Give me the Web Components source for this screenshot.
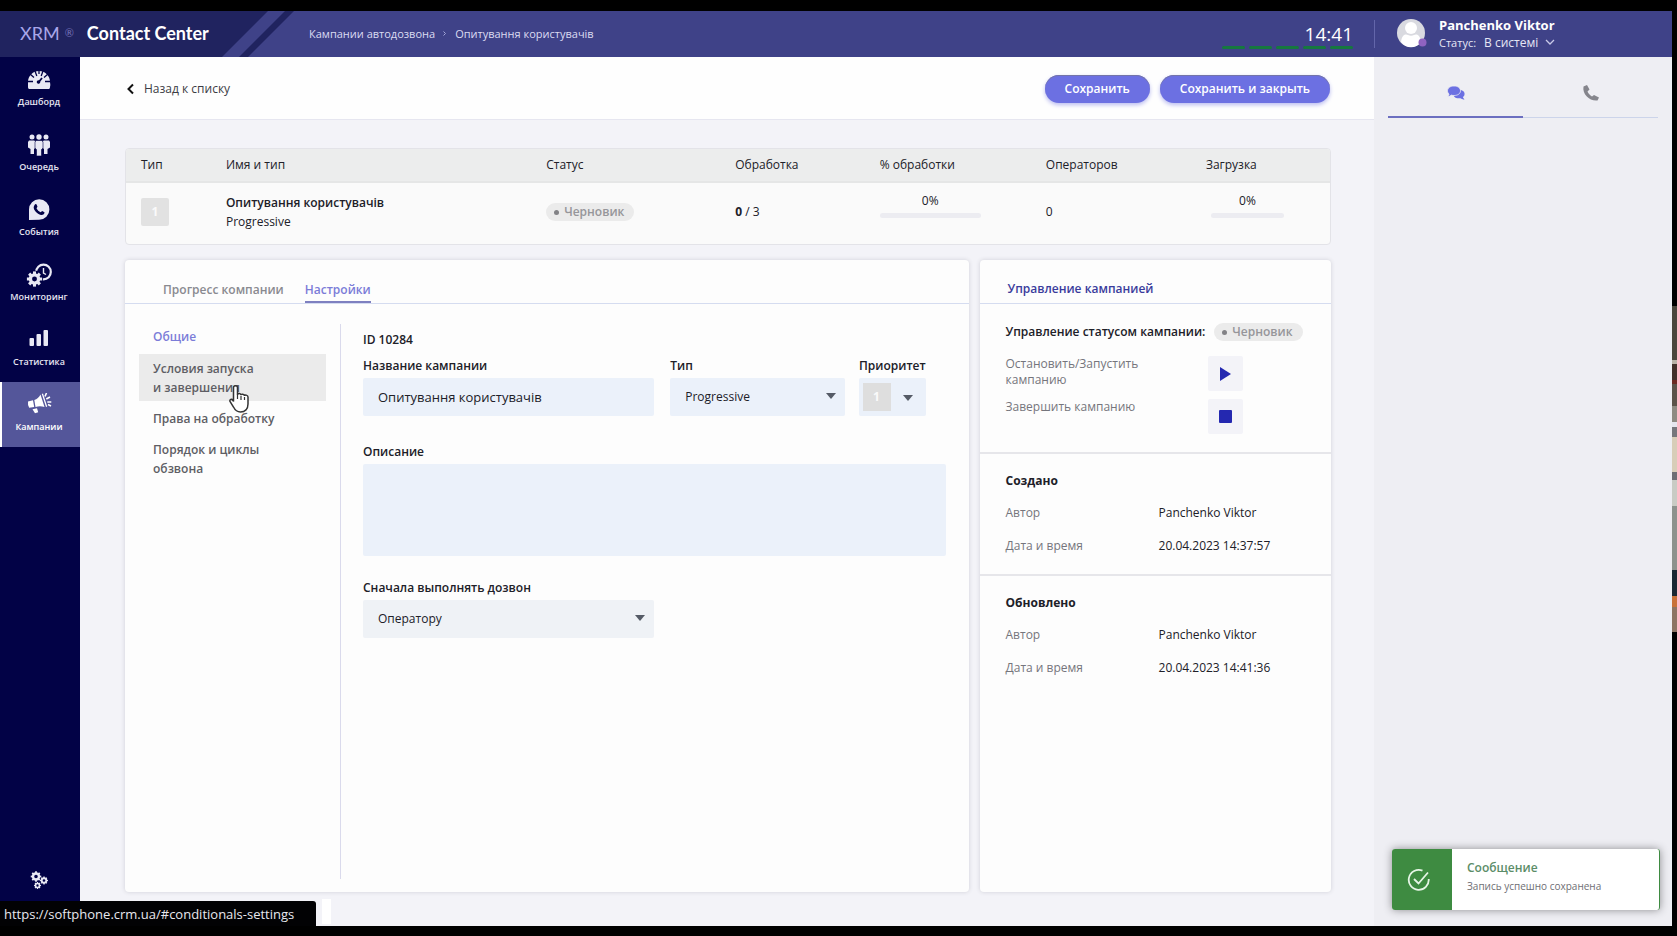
<!DOCTYPE html>
<html lang="ru">
<head>
<meta charset="utf-8">
<title>XRM Contact Center</title>
<style>
  html, body { height: 100%; }
  body { margin: 0; background: #000; font-family: "Open Sans", "Noto Sans", sans-serif; font-size: 12px; line-height: 18px; color: #202028; overflow: hidden; }
</style>
</head>
<body>
<xrm-app></xrm-app>
<script>
const define = (name, html) => {
  const tpl = document.createElement('template');
  tpl.innerHTML = '<style>*{box-sizing:border-box}:host{box-sizing:border-box;display:block}a{color:inherit;text-decoration:none}button,input,select,textarea{font:inherit;color:inherit;border:0;margin:0;outline:0}</style>' + html;
  customElements.define(name, class extends HTMLElement {
    constructor() {
      super();
      this.attachShadow({ mode: 'open' }).append(tpl.content.cloneNode(true));
    }
  });
};

const gear = (cx, cy, r, w, teeth) => {
  let s = '';
  for (let i = 0; i < teeth; i++) s += `<rect x="${cx - w / 2}" y="${cy - r - w * 0.7}" width="${w}" height="${w * 1.2}" transform="rotate(${i * 360 / teeth} ${cx} ${cy})" fill="#e9e9f4"/>`;
  return s + `<circle cx="${cx}" cy="${cy}" r="${r * 0.75}" fill="none" stroke="#e9e9f4" stroke-width="${r * 0.6}"/>`;
};

/* Status pill */
define('xrm-badge', `
<style>
  :host { display: inline-flex; align-items: center; gap: 5px; height: 18px; padding: 0 10px 0 8px; border-radius: 9px; background: #ebebeb; color: #96969a; font-weight: 600; }
  i { width: 5px; height: 5px; border-radius: 50%; background: #828286; }
</style><i></i><slot></slot>`);

/* Header bar */
define('xrm-header', `
<style>
  :host { display: flex; align-items: stretch; height: 46px; background: #3f4288; color: #fff; }
  .brand { width: 294px; flex: none; display: flex; align-items: center; padding: 0 0 3px 20px; font-family: Lato, sans-serif; font-size: 18px; white-space: nowrap;
    background: #20235f; clip-path: polygon(0 0, 100% 0, 248px 100%, 0 100%); position: relative; }
  .brand svg { position: absolute; left: 0; top: 0; }
  .x { color: #a9a6ea; }
  .r { font-size: 11px; color: #7672b8; margin: 0 13px 0 5px; }
  .cc { font-weight: 700; }
  .crumbs { display: flex; align-items: center; gap: 8px; margin-left: 15px; padding-bottom: 1px; color: #dcdcf2; flex: 1; font-size: 11px; font-weight: 500; }
  .clock { width: 131px; padding-top: 12px; margin-right: 21px; font-size: 19px; line-height: 23px; text-align: right; }
  .bars { display: flex; gap: 4px; }
  .bars i { flex: 1; height: 3px; border-radius: 2px; background: #16783f; }
  .sep { width: 1px; height: 28px; margin: 9px 22px 0 0; background: #6366aa; }
  .user { width: 275px; display: flex; gap: 12px; padding-top: 6px; }
  .user svg { margin-top: 1px; }
  .name { font-size: 13px; font-weight: 700; line-height: 17px; }
  .st { display: flex; gap: 8px; align-items: center; font-size: 11px; line-height: 17px; color: #e6e6f5; }
  select { appearance: none; padding: 0 16px 0 0; width: 72px; font-size: 12px; background: transparent url("data:image/svg+xml,%3Csvg xmlns='http://www.w3.org/2000/svg' width='10' height='7'%3E%3Cpath d='M1 1l4 4 4-4' fill='none' stroke='%23c9c9e8' stroke-width='1.3'/%3E%3C/svg%3E") no-repeat right 1px center; }
</style>
<div class="brand"><svg width="294" height="46"><path d="M222 46L268 0h17L239 46z" fill="#3f4288"/></svg><span class="x">XRM</span><span class="r">®</span><span class="cc">Contact Center</span></div>
<nav class="crumbs"><a href="#campaigns">Кампании автодозвона</a><svg width="4" height="7" viewBox="0 0 4 7"><path d="M.5 1.500l2 2-2 2" fill="none" stroke="#a5a7d8"/></svg><a href="#campaign">Опитування користувачів</a></nav>
<div class="clock">14:41<div class="bars"><i></i><i></i><i></i><i></i><i></i></div></div>
<div class="sep"></div>
<div class="user">
  <svg width="30" height="30" viewBox="0 0 30 30"><circle cx="14" cy="15" r="14" fill="#d9dae0"/><circle cx="14" cy="10" r="6" fill="#fff"/><path d="M4 24c1-8 5-8 7-7 2 1 4 1 6 0 2-1 6-1 7 7-5 7-15 7-20 0z" fill="#fff"/><circle cx="25.500" cy="24.500" r="4" fill="#8f63c0"/></svg>
  <div><div class="name">Panchenko Viktor</div><div class="st"><label for="s">Статус:</label><select id="s"><option>В системі</option></select></div></div>
</div>`);

/* Left navigation */
define('xrm-nav-item', `
<style>
  :host { height: 65px; }
  a { height: 100%; display: flex; flex-direction: column; align-items: center; justify-content: center; gap: 3px; color: #e4e4f0; font-size: 9px; line-height: 14px; font-weight: 600; border-left: 2px solid transparent; padding: 0 4px 2px 0; }
  :host([active]) a { background: #54569a; border-left-color: #fff; color: #fff; }
  ::slotted(svg) { display: block; }
</style><a href="#section"><slot name="icon"></slot><slot></slot></a>`);

define('xrm-nav', `
<style>
  :host { background: #020246; display: flex; flex-direction: column; width: 80px; flex: none; }
  .set { margin-top: auto; height: 36px; margin-bottom: 28px; display: flex; justify-content: center; align-items: center; padding-right: 2px; }
</style>
<xrm-nav-item><svg slot="icon" width="26" height="24" viewBox="0 0 26 24"><path d="M3 21h20a2 2 0 0 0 1-2 11 11 0 0 0 0-5 11 11 0 0 0-22 0v5a2 2 0 0 0 1 2z" fill="#e9e9f4"/><path d="M9 3l1.800 5M17 3l-1.800 5M4 6l4 3.500M22 6l-4 3.500M1 13.500h6M25 13.500h-6M13 2v4" stroke="#020246" stroke-width="1.300"/><path d="M12 15l4-5" stroke="#020246" stroke-width="1.800"/><circle cx="12.500" cy="14" r="1.800" fill="#020246"/></svg>Дашборд</xrm-nav-item>
<xrm-nav-item><svg slot="icon" width="24" height="24" viewBox="0 0 24 24" fill="#e9e9f4"><circle cx="5" cy="4" r="2.500"/><circle cx="12" cy="4" r="2.700"/><circle cx="19" cy="4" r="2.500"/><path d="M2 7.500h5l1 .500V15l-1 1v5H3.500v-5L1 14.500V9zM22 7.500h-5l-1 .500V15l1 1v5h3.500v-5l2.500-1.500V9z"/><path d="M9 7.500h6l1 1.500v6l-1.500 1.500V23h-5v-6.500L8 15V9z" stroke="#020246" stroke-width=".6"/></svg>Очередь</xrm-nav-item>
<xrm-nav-item><svg slot="icon" width="24" height="24" viewBox="0 0 24 24"><path d="M2 22V11.500A10.200 10.200 0 1 1 12.200 21.700z" fill="#e9e9f4"/><path d="M7.500 7c1-1.500 2-1 2.300 0l.7 1.800-1 1.400c1 2 2.300 3.200 4.200 4l1.400-1.300 2.400 1.300c.2 1.500-1.500 3-3.500 2.700-4-1-7.500-5-7.300-8z" fill="#020246"/></svg>События</xrm-nav-item>
<xrm-nav-item><svg slot="icon" width="28" height="24" viewBox="0 0 28 24"><circle cx="18.500" cy="9" r="7.300" fill="none" stroke="#e9e9f4" stroke-width="2.200"/><path d="M18.500 5v5l2.500 1.500" fill="none" stroke="#e9e9f4" stroke-width="1.400"/><circle cx="9.500" cy="16" r="8.500" fill="#020246"/>${gear(9.5, 16, 5.5, 3, 8)}</svg>Мониторинг</xrm-nav-item>
<xrm-nav-item><svg slot="icon" width="24" height="24" viewBox="0 0 24 24" fill="#e9e9f4"><rect x="2.500" y="10" width="4.500" height="8" rx="1"/><rect x="9.500" y="6" width="4.500" height="12" rx="1"/><rect x="16.500" y="2" width="4.500" height="16" rx="1"/></svg>Статистика</xrm-nav-item>
<xrm-nav-item active><svg slot="icon" width="26" height="24" viewBox="0 0 26 24" fill="#fff"><g transform="translate(0 -2)"><path d="M2 10.500l5-1.200 1.200 6.700-5 .8Q1.500 13.500 2 10.500zM8.300 9q4-1.200 6.200-5.500l4 12.500q-4.500-1.500-9 0zM6.500 18.200l4.500-1 1.200 4-3.200 1zM15.800 3l1.200-.5 4.200 13-1.200.5z"/><path d="M19 5.500l1.500-3.500M20.300 8l3.700-2M21.300 11h4M22 13.500l3 1.500" stroke="#fff" stroke-width="1.600"/></g></svg>Кампании</xrm-nav-item>
<a class="set" href="#settings" aria-label="Настройки"><svg width="20" height="20" viewBox="0 0 20 20">${gear(7, 6.5, 4, 1.8, 8)}${gear(15, 10.5, 3, 1.4, 8)}${gear(8.5, 15.5, 2.6, 1.3, 8)}</svg></a>`);

/* Page toolbar */
define('xrm-toolbar', `
<style>
  :host { display: flex; align-items: center; height: 63px; padding: 1px 44px 0; background: #fefefe; border-bottom: 1px solid #e6e6f0; }
  a { display: flex; align-items: center; gap: 9px; color: #3c3c44; margin: 0 auto 0 2px; }
  button { height: 28px; padding: 0 20px; margin-left: 10px; border-radius: 14px; background: #6c70e2; color: #fff; font-weight: 600; box-shadow: 0 2px 4px #b9bbf0, inset 0 1px 0 #7475a8; }
</style>
<a href="#list"><svg width="9" height="12" viewBox="0 0 9 12"><path d="M7 1.500L2.500 6 7 10.500" fill="none" stroke="#111" stroke-width="2"/></svg>Назад к списку</a>
<button>Сохранить</button><button>Сохранить и закрыть</button>`);

/* Campaign summary table */
define('xrm-summary', `
<style>
  :host { border: 1px solid #e3e3e8; border-radius: 4px; background: #fafafa; overflow: hidden; }
  table { width: 100%; border-collapse: collapse; table-layout: fixed; }
  th { height: 33px; padding: 0 0 1px; font-weight: 400; text-align: left; background: #eceded; border-bottom: 2px solid #e5e6e6; }
  td { height: 62px; padding: 0 0 4px; vertical-align: middle; }
  th:first-child, td:first-child { padding-left: 15px; }
  .n { display: block; width: 28px; height: 28px; line-height: 28px; border-radius: 2px; background: #e2e2e2; color: #fafafa; text-align: center; font-weight: 700; }
  .p { display: block; width: 101px; margin-top: -14px; text-align: center; }
  .p.s { width: 73px; margin-left: 5px; }
  .p i { display: block; height: 5px; margin-top: 3px; border-radius: 3px; background: #ececf1; }
  strong { font-weight: 600; display: block; }
  .who { line-height: 19px; }
  b { font-weight: 700; }
</style>
<table>
<colgroup><col style="width:8.300%"><col style="width:26.600%"><col style="width:15.700%"><col style="width:12%"><col style="width:13.800%"><col style="width:13.300%"><col></colgroup>
<thead><tr><th>Тип</th><th>Имя и тип</th><th>Статус</th><th>Обработка</th><th>% обработки</th><th>Операторов</th><th>Загрузка</th></tr></thead>
<tbody><tr><td><span class="n">1</span></td><td class="who"><strong>Опитування користувачів</strong>Progressive</td><td><xrm-badge>Черновик</xrm-badge></td><td><b>0</b> / 3</td><td><span class="p">0%<i></i></span></td><td>0</td><td><span class="p s">0%<i></i></span></td></tr></tbody>
</table>`);

/* Section menu of the settings tab */
define('xrm-menu', `
<style>
  :host { font-weight: 600; color: #5e5e64; }
  a { display: block; padding: 0 14px; line-height: 19px; margin-bottom: 12px; position: relative; }
  a.on { color: #7b7cd8; margin-bottom: 8px; padding-top: 3px; }
  a.hot { background: #ebebeb; padding-top: 5px; padding-bottom: 4px; margin-bottom: 8px; }
  svg { position: absolute; left: 89px; top: 30px; z-index: 1; }
</style>
<a class="on" href="#common">Общие</a>
<a class="hot" href="#conditionals-settings">Условия запуска<br>и завершения<svg width="22" height="30" viewBox="0 0 22 30"><path d="M5.500 17.500V3.500c0-2.500 4-2.500 4 0v7.500c0-2 3.500-1.800 3.500.3 0-1.600 3.500-1.500 3.500.7 0-1.500 3.500-1.200 3.500 1V20c0 5-3 8-7.500 8-4 0-5.500-2-7-5l-3.500-5.500c-.8-2 1.700-3 3-1z" fill="#fff" stroke="#333" stroke-width="1.500"/><path d="M9.500 11v4M13 12v4M16.500 13v3" stroke="#333" stroke-width="1.200"/></svg></a>
<a href="#rights">Права на обработку</a>
<a href="#order">Порядок и циклы<br>обзвона</a>`);

/* Campaign form */
define('xrm-form', `
<style>
  .id { font-weight: 600; line-height: 18px; }
  label { display: block; font-weight: 600; line-height: 18px; margin-bottom: 3px; }
  .row { display: flex; gap: 16px; margin: 8px 0 27px; }
  .row div:nth-child(1) { flex: 0 0 50%; }
  .row div:nth-child(2) { flex: 0 0 30%; }
  .row div:nth-child(3) { width: 67px; margin-left: -2px; white-space: nowrap; }
  input, select, textarea { display: block; width: 100%; height: 38px; padding: 0 15px; border-radius: 2px; background-color: #ebf1fa; }
  input { font-size: 13px; }
  textarea { height: 92px; resize: none; margin-bottom: 23px; }
  select { appearance: none; background-image: url("data:image/svg+xml,%3Csvg xmlns='http://www.w3.org/2000/svg' width='10' height='6'%3E%3Cpath d='M0 0h10L5 6z' fill='%23555b66'/%3E%3C/svg%3E"); background-repeat: no-repeat; background-position: right 9px top 15px; }
  #prio { padding: 0 14px; color: #fafafa; font-weight: 700; background-image: url("data:image/svg+xml,%3Csvg xmlns='http://www.w3.org/2000/svg' width='10' height='6'%3E%3Cpath d='M0 0h10L5 6z' fill='%23555b66'/%3E%3C/svg%3E"), linear-gradient(#dedede, #dedede); background-size: auto, 28px 28px; background-position: right 13px top 17px, 4px 5px; }
  .first { width: 50%; }
  #first { background-color: #eff2f6; }
</style>
<div class="id">ID 10284</div>
<div class="row">
  <div><label for="name">Название кампании</label><input id="name" value="Опитування користувачів"></div>
  <div><label for="type">Тип</label><select id="type"><option>Progressive</option></select></div>
  <div><label for="prio">Приоритет</label><select id="prio"><option>1</option></select></div>
</div>
<label for="desc">Описание</label><textarea id="desc"></textarea>
<div class="first"><label for="first">Сначала выполнять дозвон</label><select id="first"><option>Оператору</option></select></div>`);

/* Settings panel */
define('xrm-settings', `
<style>
  :host { display: flex; flex-direction: column; background: #fdfdfd; border-radius: 4px; box-shadow: 0 0 4px #cfcfd8; }
  .tabs { display: flex; gap: 21px; height: 44px; padding: 19px 0 0 38px; border-bottom: 1px solid #d5dcf0; font-weight: 600; color: #8a8a90; }
  .tabs a { height: 24px; line-height: 22px; }
  .tabs .on { color: #7b7cd8; border-bottom: 2px solid #7e80c0; }
  .body { flex: 1; display: grid; grid-template-columns: 187px 1fr; gap: 0 14px; padding: 0 23px 0 14px; }
  xrm-form { border-left: 1px solid #dadaec; padding: 7px 0 0 22px; margin: 20px 0 13px; }
  xrm-menu { padding-top: 20px; }
</style>
<nav class="tabs"><a href="#progress">Прогресс компании</a><a class="on" href="#settings">Настройки</a></nav>
<div class="body"><xrm-menu></xrm-menu><xrm-form></xrm-form></div>`);

/* Author and date block */
define('xrm-meta', `
<style>
  :host { border-top: 2px solid #e6e6ea; padding: 18px 24px 0 26px; height: 122px; }
  h3 { margin: 0 0 14px; font-size: 12px; line-height: 18px; font-weight: 700; }
  dl { margin: 0; display: grid; grid-template-columns: 153px 1fr; row-gap: 15px; }
  dt { color: #75757c; } dd { margin: 0; }
</style>
<h3><slot name="title"></slot></h3>
<dl><dt>Автор</dt><dd><slot name="author"></slot></dd><dt>Дата и время</dt><dd><slot name="date"></slot></dd></dl>`);

/* Campaign control panel */
define('xrm-control', `
<style>
  :host { background: #fdfdfd; border-radius: 4px; box-shadow: 0 0 4px #cfcfd8; }
  h2 { margin: 0; height: 44px; padding: 20px 0 0 28px; font-size: 12px; line-height: 18px; font-weight: 600; color: #3a3c9c; border-bottom: 1px solid #d5dcf0; }
  .s { display: flex; align-items: center; gap: 9px; padding: 19px 0 0 26px; font-weight: 600; white-space: nowrap; }
  .acts { display: grid; grid-template-columns: 202px 35px; row-gap: 8px; padding: 15px 0 0 26px; height: 111px; align-content: start; line-height: 16px; color: #75757c; }
  .acts span { width: 150px; }
  button { width: 35px; height: 35px; padding: 0; display: grid; place-items: center; background: #f3f3f8; border-radius: 2px; }
</style>
<h2>Управление кампанией</h2>
<div class="s">Управление статусом кампании:<xrm-badge>Черновик</xrm-badge></div>
<div class="acts"><span>Остановить/Запустить кампанию</span><button aria-label="Запустить"><svg width="13" height="14"><path d="M1 0l11 7L1 14z" fill="#2428b0"/></svg></button>
<span>Завершить кампанию</span><button aria-label="Завершить"><svg width="13" height="13"><rect width="13" height="13" rx="1" fill="#2428b0"/></svg></button></div>
<xrm-meta><span slot="title">Создано</span><span slot="author">Panchenko Viktor</span><span slot="date">20.04.2023 14:37:57</span></xrm-meta>
<xrm-meta><span slot="title">Обновлено</span><span slot="author">Panchenko Viktor</span><span slot="date">20.04.2023 14:41:36</span></xrm-meta>`);

/* Notification */
define('xrm-toast', `
<style>
  :host { display: flex; height: 61px; border-radius: 3px; overflow: hidden; background: #fff; border-right: 1px solid #3e8b41; box-shadow: 0 0 8px #8c8c90; }
  .i { width: 60px; display: grid; place-items: center; padding-right: 6px; background: #3e8b41; }
  .t { padding: 10px 0 0 15px; }
  h4 { margin: 0; font-size: 12px; line-height: 18px; font-weight: 600; color: #5b8d68; }
  p { margin: 0; font-size: 10px; line-height: 18px; color: #6e6e74; }
</style>
<div class="i"><svg width="24" height="24" viewBox="0 0 24 24" fill="none" stroke="#e6f5e6" stroke-width="1.800"><path d="M15.500 2.600A10 10 0 1 0 21.700 11"/><path d="M7 11l4.500 4.500L21 4.500"/></svg></div>
<div class="t"><h4>Сообщение</h4><p>Запись успешно сохранена</p></div>`);

/* Right communication column */
define('xrm-side', `
<style>
  :host { width: 298px; flex: none; display: flex; flex-direction: column; justify-content: space-between; background: #eeeef3; padding: 0 14px 16px; }
  nav { display: flex; }
  nav a { flex: 1; height: 61px; padding-top: 12px; display: grid; place-items: center; border-bottom: 1px solid #ccd4ea; }
  nav a.on { border-bottom: 2px solid #6c6fc0; }
  xrm-toast { margin: 0 -2px 0 4px; }
</style>
<nav><a class="on" href="#chat" aria-label="Чат"><svg width="18" height="16" viewBox="0 0 18 16"><path d="M12 5c4 0 6 2 5.500 4.500-.2 1.500-1 2-1.500 2.500.1 1 .8 1.500 1.500 2.500-2 0-3-.7-4-1.300-3 .3-6 0-7-2.700z" fill="#6c70e2"/><path d="M7 1c3.800 0 6.500 2 6.500 4.800S10.800 10.500 7 10.500c-1 0-1.700-.1-2.500-.4C3.500 11 2.300 11.500.7 11.600 1.500 10.500 2 10 2 9 1 8 .5 7 .5 5.800.5 3 3.300 1 7 1z" fill="#6c70e2" stroke="#eeeef3" stroke-width=".8"/></svg></a>
<a href="#calls" aria-label="Звонки"><svg width="18" height="18" viewBox="0 0 18 18"><path d="M1.500 2.500L5 1l2.500 4.500-2 2c.8 2 2.500 3.800 4.500 5l2-1.500 5 2.500-1.500 3C8 17.500 0 10.500 1.500 2.500z" fill="#85858c"/></svg></a></nav>
<xrm-toast></xrm-toast>`);

/* Application window over a dark desktop */
define('xrm-app', `
<style>
  :host { height: 100vh; padding: 11px 5px 10px 0; position: relative; }
  .win { height: 100%; display: flex; flex-direction: column; }
  .cols { flex: 1; min-height: 0; display: flex; }
  main { flex: 1; min-width: 0; display: flex; flex-direction: column; background: #f3f3f8; }
  .page { flex: 1; display: flex; flex-direction: column; gap: 15px; padding: 28px 43px 34px 45px; }
  .panels { flex: 1; display: grid; grid-template-columns: 12fr 5fr; gap: 11px; }
  .link { position: absolute; left: 0; bottom: 10px; width: 316px; height: 25px; padding-left: 4px; background: #020204; color: #e8e8ee; border-radius: 0 3px 0 0; font-size: 13px; line-height: 26px; white-space: nowrap; }
  .chip { position: absolute; left: 322px; bottom: 12px; width: 9px; height: 25px; background: #fff; }
  .wall { position: absolute; right: 0; top: 306px; width: 5px; height: 326px; background: linear-gradient(#4b463c 0 54px, #b9b2a6 54px 58px, #42302a 58px 74px, #6b2a22 74px 78px, #5c5349 78px 100px, #8f8b82 100px 116px, #e6e6ee 116px 121px, #77777c 121px 131px, #d8cdb8 131px 166px, #6e6e74 166px 174px, #c9cbc4 174px 200px, #8d928d 200px 264px, #1a2733 264px 290px, #c8713a 290px 301px, #8d7463 301px); }
</style>
<div class="win"><xrm-header></xrm-header>
<div class="cols"><xrm-nav></xrm-nav>
<main><xrm-toolbar></xrm-toolbar><div class="page"><xrm-summary></xrm-summary><div class="panels"><xrm-settings></xrm-settings><xrm-control></xrm-control></div></div></main>
<xrm-side></xrm-side></div></div>
<div class="wall"></div><div class="chip"></div><div class="link">https://softphone.crm.ua/#conditionals-settings</div>`);
</script>
</body>
</html>
